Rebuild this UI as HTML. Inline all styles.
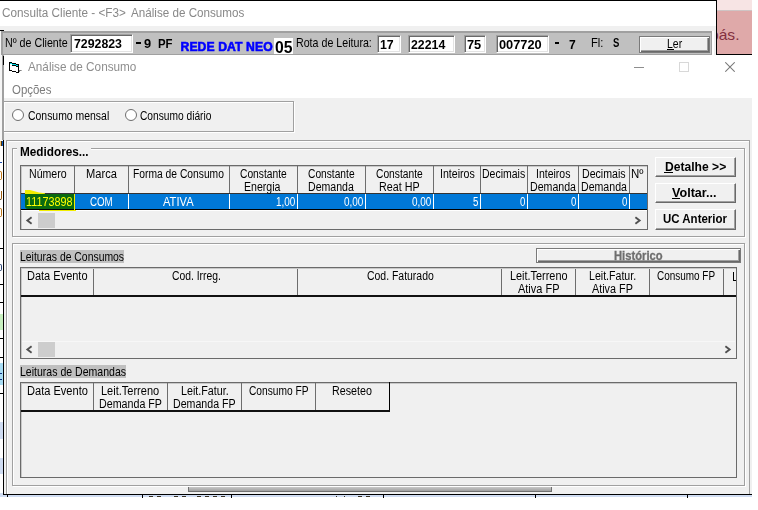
<!DOCTYPE html>
<html><head><meta charset="utf-8"><title>Análise de Consumo</title>
<style>
html,body{margin:0;padding:0;background:#fff;}
body{width:758px;height:510px;position:relative;overflow:hidden;font-family:"Liberation Sans",sans-serif;}
.a{position:absolute;}
.t{position:absolute;white-space:pre;line-height:20px;transform-origin:0 50%;font-family:"Liberation Sans",sans-serif;}
.inp{position:absolute;background:#fff;box-sizing:border-box;border-top:1px solid #a0a0a0;border-left:1px solid #a0a0a0;border-right:1px solid #fff;border-bottom:1px solid #fff;box-shadow:inset 1px 1px 0 #696969, inset -1px -1px 0 #e3e3e3;}
.btn{position:absolute;background:#f0f0f0;box-sizing:border-box;border-top:1px solid #fff;border-left:1px solid #fff;border-right:1px solid #696969;border-bottom:1px solid #696969;box-shadow:inset -1px -1px 0 #a0a0a0;}
.grp{position:absolute;box-sizing:border-box;border:1px solid #a0a0a0;box-shadow:inset 1px 1px 0 #fff, 1px 1px 0 #fff;}
.grid{position:absolute;box-sizing:border-box;border:1px solid #6a6a6a;box-shadow:inset 1px 1px 0 #c8c8c8;background:#f0f0f0;}
.vd{position:absolute;width:1px;background:#6d6d6d;}
.wd{position:absolute;width:1px;background:#fff;}
</style></head><body>

<!-- ===== outer window "Consulta Cliente" ===== -->
<div class="a" style="left:0;top:0;width:717px;height:1px;background:#000"></div>
<div class="a" style="left:716px;top:0;width:1px;height:55px;background:#000"></div>
<div class="a" style="left:0;top:26px;width:716px;height:5px;background:#f0f0f0"></div>
<div class="a" style="left:0;top:30px;width:4px;height:1px;background:#000"></div>
<!-- left strip -->
<div class="a" style="left:0;top:31px;width:2px;height:109px;background:#f6f6f6"></div>
<div class="a" style="left:0;top:140px;width:3px;height:355px;background:#fff"></div>
<div class="a" style="left:0;top:141px;width:1px;height:5px;background:#f0c878"></div>
<div class="a" style="left:1px;top:141px;width:1px;height:5px;background:#50300c"></div>
<div class="a" style="left:2px;top:141px;width:1px;height:5px;background:#1060c0"></div>
<div class="a" style="left:0;top:162px;width:2px;height:1px;background:#2050b0"></div>
<div class="a" style="left:0;top:171px;width:2px;height:9px;border-radius:0 4px 4px 0;box-sizing:border-box;border:1px solid #c07818;border-left:none;background:#fff"></div>
<div class="a" style="left:0;top:191px;width:2px;height:9px;border-radius:0 0 3px 0;box-sizing:border-box;border-right:1px solid #a06010;border-bottom:1px solid #503010"></div>
<div class="a" style="left:0;top:208px;width:2px;height:9px;border-radius:0 4px 4px 0;box-sizing:border-box;border:1px solid #c07818;border-left:none;background:#fff"></div>
<div class="a" style="left:0;top:248px;width:3px;height:1px;background:#000"></div>
<div class="a" style="left:0;top:284px;width:3px;height:1px;background:#000"></div>
<div class="a" style="left:0;top:302px;width:3px;height:1px;background:#000"></div>
<div class="a" style="left:0;top:338px;width:3px;height:1px;background:#000"></div>
<div class="a" style="left:0;top:357px;width:3px;height:1px;background:#000"></div>
<div class="a" style="left:0;top:393px;width:3px;height:1px;background:#000"></div>
<div class="a" style="left:0;top:264px;width:2px;height:7px;border-radius:0 2px 2px 0;box-sizing:border-box;border:1px solid #304878;border-left:none"></div>
<div class="a" style="left:0;top:314px;width:3px;height:16px;background:#c8f0c0"></div>
<div class="a" style="left:0;top:363px;width:3px;height:22px;background:#a8dcf4"></div>
<div class="a" style="left:0;top:373px;width:2px;height:1px;background:#103080"></div>
<div class="a" style="left:0;top:379px;width:2px;height:1px;background:#103080"></div>
<div class="a" style="left:0;top:422px;width:3px;height:17px;background:#cfdcf2"></div>
<div class="a" style="left:0;top:458px;width:3px;height:16px;background:#cfdcf2"></div>
<div class="a" style="left:0;top:493px;width:3px;height:2px;background:#cfdcf2"></div>
<!-- toolbar -->
<div class="a" style="left:1px;top:31px;width:715px;height:23px;background:#c0c0c0"></div>
<div class="a" style="left:1px;top:31px;width:711px;height:2px;background:#a0a0a0"></div>
<div class="a" style="left:1px;top:31px;width:2px;height:24px;background:#a0a0a0"></div>
<div class="a" style="left:711px;top:31px;width:1px;height:23px;background:#a0a0a0"></div>
<div class="a" style="left:712px;top:31px;width:2px;height:24px;background:#fff"></div>
<div class="a" style="left:714px;top:31px;width:2px;height:24px;background:#f0f0f0"></div>
<div class="a" style="left:3px;top:54px;width:709px;height:1px;background:#a0a0a0"></div>
<!-- toolbar inputs -->
<div class="inp" style="left:70px;top:34px;width:63px;height:19px"></div>
<div class="a" style="left:274px;top:38px;width:19px;height:16px;background:#fff"></div>
<div class="inp" style="left:377px;top:35px;width:24px;height:18px"></div>
<div class="inp" style="left:408px;top:35px;width:47px;height:18px"></div>
<div class="inp" style="left:464px;top:35px;width:22px;height:18px"></div>
<div class="inp" style="left:496px;top:35px;width:53px;height:18px"></div>
<div class="a" style="left:136px;top:42px;width:5px;height:2px;background:#000"></div>
<div class="a" style="left:555px;top:42px;width:4px;height:2px;background:#000"></div>
<!-- Ler button -->
<div class="a" style="left:639px;top:36px;width:71px;height:17px;background:#f0f0f0;box-sizing:border-box;border:1px solid #7a7a7a;box-shadow:inset 1px 1px 0 #fff, inset -1px -1px 0 #696969, inset -2px -2px 0 #a0a0a0"></div>
<div class="a" style="left:667px;top:49px;width:7px;height:1px;background:#000"></div>

<!-- ===== pink region ===== -->
<div class="a" style="left:717px;top:0;width:35px;height:10px;background:#f7e4e4"></div>
<div class="a" style="left:717px;top:10px;width:35px;height:1px;background:#cfc4c4"></div>
<div class="a" style="left:717px;top:11px;width:35px;height:43px;background:#dfa9a9;overflow:hidden"><span class="t" style="left:-7.5px;top:14px;font-size:15px;color:#83303f;transform:scaleX(1.04)">pás.</span></div>
<div class="a" style="left:716px;top:54px;width:36px;height:1px;background:#000"></div>

<!-- ===== inner window "Análise de Consumo" ===== -->
<div class="a" style="left:2px;top:55px;width:2px;height:85px;background:#a0a0a0"></div>
<div class="a" style="left:4px;top:55px;width:748px;height:43px;background:#fff"></div>
<div class="a" style="left:4px;top:98px;width:748px;height:396px;background:#f0f0f0"></div>
<div class="a" style="left:3px;top:56px;width:1px;height:9px;background:#000"></div>
<div class="a" style="left:3px;top:140px;width:1px;height:355px;background:#000"></div>
<div class="a" style="left:3px;top:494px;width:749px;height:1px;background:#000"></div>
<div class="a" style="left:0;top:495px;width:752px;height:2px;background:#cfdcf2"></div>

<!-- window icon -->
<svg class="a" style="left:8px;top:61px" width="16" height="14" viewBox="8 61 16 14" shape-rendering="crispEdges">
 <g fill="#000">
  <rect x="9" y="62" width="3" height="1"/><rect x="12" y="63" width="4" height="1"/><rect x="16" y="64" width="3" height="1"/>
  <rect x="9" y="62" width="1" height="9"/>
  <rect x="18" y="64" width="1" height="9"/>
  <rect x="9" y="70" width="3" height="1"/><rect x="12" y="71" width="4" height="1"/><rect x="16" y="72" width="3" height="1"/>
  <rect x="12" y="65" width="4" height="1"/><rect x="16" y="66" width="2" height="1"/>
 </g>
 <g fill="#00e0e8">
  <rect x="10" y="63" width="2" height="1"/><rect x="12" y="64" width="4" height="1"/><rect x="16" y="65" width="2" height="1"/>
 </g>
 <rect x="19" y="70" width="2" height="1" fill="#808080"/><rect x="19" y="71" width="1" height="1" fill="#808080"/><rect x="21" y="70" width="1" height="1" fill="#b0b0b0"/>
</svg>
<!-- window controls -->
<div class="a" style="left:634px;top:67px;width:10px;height:1px;background:#8e8e8e"></div>
<div class="a" style="left:679px;top:62px;width:10px;height:10px;box-sizing:border-box;border:1px solid #d8d8d8"></div>
<svg class="a" style="left:725px;top:62px" width="10" height="10" viewBox="0 0 10 10"><path d="M0.3 0.3 L9.7 9.7 M9.7 0.3 L0.3 9.7" stroke="#7a7a7a" stroke-width="1.05" fill="none"/></svg>

<!-- radio frame -->
<div class="grp" style="left:3px;top:101px;width:291px;height:31px"></div>
<div class="a" style="left:12px;top:109px;width:12px;height:12px;border-radius:50%;background:#fff;box-sizing:border-box;border:1px solid #6e6e6e"></div>
<div class="a" style="left:125px;top:109px;width:12px;height:12px;border-radius:50%;background:#fff;box-sizing:border-box;border:1px solid #6e6e6e"></div>

<!-- big panel -->
<div class="a" style="left:6px;top:140px;width:744px;height:354px;box-sizing:border-box;border:1px solid #a0a0a0;border-bottom:none;box-shadow:inset 1px 1px 0 #fff"></div>

<!-- Medidores group -->
<div class="grp" style="left:12px;top:148px;width:733px;height:89px"></div>
<div class="a" style="left:17px;top:146px;width:74px;height:6px;background:#f0f0f0"></div>

<!-- grid 1 -->
<div class="grid" style="left:20px;top:165px;width:628px;height:65px"></div>
<div class="vd" style="left:74px;top:166px;height:27px"></div>
<div class="vd" style="left:128px;top:166px;height:27px"></div>
<div class="vd" style="left:229px;top:166px;height:27px"></div>
<div class="vd" style="left:297px;top:166px;height:27px"></div>
<div class="vd" style="left:365px;top:166px;height:27px"></div>
<div class="vd" style="left:433px;top:166px;height:27px"></div>
<div class="vd" style="left:480px;top:166px;height:27px"></div>
<div class="vd" style="left:527px;top:166px;height:27px"></div>
<div class="vd" style="left:578px;top:166px;height:27px"></div>
<div class="vd" style="left:629px;top:166px;height:27px"></div>
<div class="a" style="left:21px;top:193px;width:626px;height:1px;background:#333"></div>
<div class="a" style="left:21px;top:194px;width:626px;height:15px;background:#0078d7"></div>
<div class="a" style="left:21px;top:209px;width:626px;height:1px;background:#000"></div>
<div class="a" style="left:21px;top:210px;width:626px;height:1px;background:#fff"></div>
<div class="wd" style="left:74px;top:194px;height:15px"></div>
<div class="wd" style="left:128px;top:194px;height:15px"></div>
<div class="wd" style="left:229px;top:194px;height:15px"></div>
<div class="wd" style="left:297px;top:194px;height:15px"></div>
<div class="wd" style="left:365px;top:194px;height:15px"></div>
<div class="wd" style="left:433px;top:194px;height:15px"></div>
<div class="wd" style="left:480px;top:194px;height:15px"></div>
<div class="wd" style="left:527px;top:194px;height:15px"></div>
<div class="wd" style="left:578px;top:194px;height:15px"></div>
<div class="wd" style="left:629px;top:194px;height:15px"></div>
<!-- yellow highlight + green cell -->
<svg class="a" style="left:24px;top:189px" width="24" height="6" viewBox="24 189 24 6"><path d="M25 194 L25 190 L30 190 L39 192.4 L45 193.2 L45 194 Z" fill="#f2ee00"/></svg>
<div class="a" style="left:39px;top:210px;width:37px;height:1px;background:#f2ee00"></div>
<div class="a" style="left:74px;top:194px;width:1px;height:16px;background:#f2ee00"></div>
<div class="a" style="left:25px;top:194px;width:49px;height:15px;background:#0a6a10;border-radius:0 0 0 3px"></div>
<!-- scrollbar 1 -->
<div class="a" style="left:38px;top:213px;width:17px;height:15px;background:#cdcdcd"></div>
<svg class="a" style="left:25px;top:216px" width="8" height="9" viewBox="0 0 8 9"><path d="M6.6 1.3 L2.4 4.5 L6.6 7.7" stroke="#505050" stroke-width="1.9" fill="none"/></svg>
<svg class="a" style="left:634px;top:216px" width="8" height="9" viewBox="0 0 8 9"><path d="M1.4 1.3 L5.6 4.5 L1.4 7.7" stroke="#505050" stroke-width="1.9" fill="none"/></svg>

<!-- buttons -->
<div class="btn" style="left:655px;top:157px;width:81px;height:20px"></div>
<div class="btn" style="left:655px;top:183px;width:81px;height:20px"></div>
<div class="btn" style="left:655px;top:209px;width:81px;height:21px"></div>
<div class="a" style="left:664px;top:172px;width:9px;height:1px;background:#000"></div>
<div class="a" style="left:672px;top:198px;width:8px;height:1px;background:#000"></div>

<!-- group 2 -->
<div class="grp" style="left:12px;top:243px;width:733px;height:243px"></div>
<div class="a" style="left:20px;top:250px;width:104px;height:13px;background:#c0c0c0"></div>
<!-- Historico button -->
<div class="a" style="left:536px;top:248px;width:205px;height:15px;background:#f0f0f0;box-sizing:border-box;border:1px solid #7a7a7a;box-shadow:inset 1px 1px 0 #fff, inset -1px -1px 0 #696969, inset -2px -2px 0 #a0a0a0"></div>

<!-- grid 2 -->
<div class="grid" style="left:20px;top:267px;width:717px;height:92px"></div>
<div class="vd" style="left:93px;top:269px;height:26px"></div>
<div class="vd" style="left:297px;top:269px;height:26px"></div>
<div class="vd" style="left:501px;top:269px;height:26px"></div>
<div class="vd" style="left:575px;top:269px;height:26px"></div>
<div class="vd" style="left:649px;top:269px;height:26px"></div>
<div class="vd" style="left:723px;top:269px;height:26px"></div>
<div class="a" style="left:21px;top:295px;width:715px;height:2px;background:#111"></div>
<div class="a" style="left:733px;top:272px;width:1px;height:9px;background:#000"></div>
<div class="a" style="left:733px;top:280px;width:3px;height:1px;background:#000"></div>
<div class="a" style="left:22px;top:341px;width:713px;height:1px;background:#f7f7f7"></div>
<div class="a" style="left:38px;top:342px;width:17px;height:15px;background:#cdcdcd"></div>
<svg class="a" style="left:25px;top:345px" width="8" height="9" viewBox="0 0 8 9"><path d="M6.6 1.3 L2.4 4.5 L6.6 7.7" stroke="#505050" stroke-width="1.9" fill="none"/></svg>
<svg class="a" style="left:724px;top:345px" width="8" height="9" viewBox="0 0 8 9"><path d="M1.4 1.3 L5.6 4.5 L1.4 7.7" stroke="#505050" stroke-width="1.9" fill="none"/></svg>

<!-- section 3 -->
<div class="a" style="left:20px;top:365px;width:106px;height:13px;background:#c0c0c0"></div>
<div class="grid" style="left:20px;top:382px;width:717px;height:96px"></div>
<div class="vd" style="left:93px;top:383px;height:27px"></div>
<div class="vd" style="left:167px;top:383px;height:27px"></div>
<div class="vd" style="left:241px;top:383px;height:27px"></div>
<div class="vd" style="left:315px;top:383px;height:27px"></div>
<div class="a" style="left:389px;top:382px;width:1px;height:30px;background:#000"></div>
<div class="a" style="left:21px;top:410px;width:369px;height:2px;background:#111"></div>

<!-- bottom bar -->
<div class="a" style="left:188px;top:487px;width:364px;height:5px;background:linear-gradient(#c8c8c8,#a0a0a0);box-sizing:border-box;border-left:1px solid #707070;border-bottom:1px solid #707070;border-right:1px solid #707070"></div>

<!-- background remnants at bottom -->
<div class="a" style="left:7px;top:495px;width:1px;height:2px;background:#000"></div>
<div class="a" style="left:142px;top:495px;width:1px;height:3px;background:#000"></div>
<div class="a" style="left:231px;top:495px;width:1px;height:3px;background:#000"></div>
<div class="a" style="left:383px;top:495px;width:1px;height:3px;background:#000"></div>
<div class="a" style="left:535px;top:495px;width:1px;height:3px;background:#000"></div>
<div class="a" style="left:687px;top:495px;width:1px;height:3px;background:#000"></div>

<div class="a" style="left:149px;top:496px;width:4px;height:1px;background:#3a3428"></div>
<div class="a" style="left:157px;top:496px;width:4px;height:1px;background:#3a3428"></div>
<div class="a" style="left:174px;top:496px;width:4px;height:1px;background:#3a3428"></div>
<div class="a" style="left:182px;top:496px;width:4px;height:1px;background:#3a3428"></div>
<div class="a" style="left:197px;top:496px;width:4px;height:1px;background:#3a3428"></div>
<div class="a" style="left:205px;top:496px;width:4px;height:1px;background:#3a3428"></div>
<div class="a" style="left:213px;top:496px;width:4px;height:1px;background:#3a3428"></div>
<div class="a" style="left:221px;top:496px;width:4px;height:1px;background:#3a3428"></div>
<div class="a" style="left:358px;top:496px;width:4px;height:1px;background:#3a3428"></div>
<div class="a" style="left:366px;top:496px;width:4px;height:1px;background:#3a3428"></div>
<div class="a" style="left:336px;top:496px;width:1px;height:1px;background:#3a3428"></div>
<div class="a" style="left:344px;top:496px;width:1px;height:1px;background:#3a3428"></div>
<div id="txt" style="position:absolute;left:0;top:0;width:758px;height:510px;will-change:transform">
<span class="t" style="left:1.5px;top:3px;font-size:12.3px;font-weight:400;color:#888888;transform:scaleX(0.9538);">Consulta Cliente - &lt;F3&gt;</span>
<span class="t" style="left:130.6px;top:3px;font-size:12.3px;font-weight:400;color:#888888;transform:scaleX(0.9475);">Análise de Consumos</span>
<span class="t" style="left:4.7px;top:33px;font-size:13px;font-weight:400;color:#000;transform:scaleX(0.8221);">Nº de Cliente</span>
<span class="t" style="left:74.3px;top:34px;font-size:13px;font-weight:700;color:#000;transform:scaleX(0.9468);">7292823</span>
<span class="t" style="left:143.5px;top:34px;font-size:13px;font-weight:700;color:#000;transform:scaleX(0.9857);">9</span>
<span class="t" style="left:158.4px;top:34px;font-size:13px;font-weight:700;color:#000;transform:scaleX(0.8758);">PF</span>
<span class="t" style="left:180.5px;top:37px;font-size:12.2px;font-weight:700;color:#0000ff;letter-spacing:0.090px;-webkit-text-stroke:0.6px #0000ff;">REDE DAT NEO</span>
<span class="t" style="left:274.7px;top:38px;font-size:16px;font-weight:700;color:#000;transform:scaleX(0.9833);">05</span>
<span class="t" style="left:295.7px;top:33px;font-size:13px;font-weight:400;color:#000;transform:scaleX(0.8196);">Rota de Leitura:</span>
<span class="t" style="left:379.5px;top:35px;font-size:13px;font-weight:700;color:#000;transform:scaleX(0.9487);">17</span>
<span class="t" style="left:410.5px;top:35px;font-size:13px;font-weight:700;color:#000;transform:scaleX(0.9480);">22214</span>
<span class="t" style="left:467.0px;top:35px;font-size:13px;font-weight:700;color:#000;transform:scaleX(0.9838);">75</span>
<span class="t" style="left:499.0px;top:35px;font-size:13px;font-weight:700;color:#000;transform:scaleX(0.9849);">007720</span>
<span class="t" style="left:568.8px;top:35px;font-size:13px;font-weight:700;color:#000;transform:scaleX(0.9286);">7</span>
<span class="t" style="left:590.8px;top:33px;font-size:13px;font-weight:400;color:#000;transform:scaleX(0.8574);">Fl:</span>
<span class="t" style="left:612.6px;top:33px;font-size:13px;font-weight:700;color:#000;transform:scaleX(0.7333);">S</span>
<span class="t" style="left:666.6px;top:34px;font-size:13px;font-weight:400;color:#000;transform:scaleX(0.8072);">Ler</span>
<span class="t" style="left:28.2px;top:57px;font-size:12.6px;font-weight:400;color:#8e8e8e;transform:scaleX(0.9328);">Análise de Consumo</span>
<span class="t" style="left:11.9px;top:80px;font-size:12.3px;font-weight:400;color:#7c7c7c;transform:scaleX(0.9306);">Opções</span>
<span class="t" style="left:27.8px;top:106px;font-size:12.3px;font-weight:400;color:#000;transform:scaleX(0.8488);">Consumo mensal</span>
<span class="t" style="left:140.3px;top:106px;font-size:12.3px;font-weight:400;color:#000;transform:scaleX(0.8298);">Consumo diário</span>
<span class="t" style="left:19.8px;top:142px;font-size:12.5px;font-weight:700;color:#000;transform:scaleX(0.9412);">Medidores...</span>
<span class="t" style="left:28.6px;top:164px;font-size:12.3px;font-weight:400;color:#000;transform:scaleX(0.8602);">Número</span>
<span class="t" style="left:85.5px;top:164px;font-size:12.3px;font-weight:400;color:#000;transform:scaleX(0.9032);">Marca</span>
<span class="t" style="left:133.0px;top:164px;font-size:12.3px;font-weight:400;color:#000;transform:scaleX(0.8365);">Forma de Consumo</span>
<span class="t" style="left:239.8px;top:164px;font-size:12.3px;font-weight:400;color:#000;transform:scaleX(0.8343);">Constante</span>
<span class="t" style="left:244.4px;top:177px;font-size:12.3px;font-weight:400;color:#000;transform:scaleX(0.8593);">Energia</span>
<span class="t" style="left:308.0px;top:164px;font-size:12.3px;font-weight:400;color:#000;transform:scaleX(0.8307);">Constante</span>
<span class="t" style="left:307.9px;top:177px;font-size:12.3px;font-weight:400;color:#000;transform:scaleX(0.8594);">Demanda</span>
<span class="t" style="left:376.0px;top:164px;font-size:12.3px;font-weight:400;color:#000;transform:scaleX(0.8325);">Constante</span>
<span class="t" style="left:378.6px;top:177px;font-size:12.3px;font-weight:400;color:#000;transform:scaleX(0.8725);">Reat HP</span>
<span class="t" style="left:439.5px;top:164px;font-size:12.3px;font-weight:400;color:#000;transform:scaleX(0.8628);">Inteiros</span>
<span class="t" style="left:482.1px;top:164px;font-size:12.3px;font-weight:400;color:#000;transform:scaleX(0.8540);">Decimais</span>
<span class="t" style="left:535.5px;top:164px;font-size:12.3px;font-weight:400;color:#000;transform:scaleX(0.8525);">Inteiros</span>
<span class="t" style="left:529.8px;top:177px;font-size:12.3px;font-weight:400;color:#000;transform:scaleX(0.8632);">Demanda</span>
<span class="t" style="left:581.9px;top:164px;font-size:12.3px;font-weight:400;color:#000;transform:scaleX(0.8621);">Decimais</span>
<span class="t" style="left:581.1px;top:177px;font-size:12.3px;font-weight:400;color:#000;transform:scaleX(0.8613);">Demanda</span>
<span class="t" style="left:631.3px;top:164px;font-size:12.3px;font-weight:400;color:#000;transform:scaleX(0.9316);">Nº</span>
<span class="t" style="left:26.3px;top:192px;font-size:12.3px;font-weight:400;color:#ffff00;transform:scaleX(0.8804);">11173898</span>
<span class="t" style="left:89.7px;top:192px;font-size:12.3px;font-weight:400;color:#fff;transform:scaleX(0.7910);">COM</span>
<span class="t" style="left:162.9px;top:192px;font-size:12.3px;font-weight:400;color:#fff;transform:scaleX(0.9071);">ATIVA</span>
<span class="t" style="left:275.9px;top:192px;font-size:12.3px;font-weight:400;color:#fff;transform:scaleX(0.8093);">1,00</span>
<span class="t" style="left:343.9px;top:192px;font-size:12.3px;font-weight:400;color:#fff;transform:scaleX(0.8093);">0,00</span>
<span class="t" style="left:412.1px;top:192px;font-size:12.3px;font-weight:400;color:#fff;transform:scaleX(0.8093);">0,00</span>
<span class="t" style="left:473.3px;top:192px;font-size:12.3px;font-weight:400;color:#fff;transform:scaleX(0.7857);">5</span>
<span class="t" style="left:520.2px;top:192px;font-size:12.3px;font-weight:400;color:#fff;transform:scaleX(0.7857);">0</span>
<span class="t" style="left:571.0px;top:192px;font-size:12.3px;font-weight:400;color:#fff;transform:scaleX(0.7857);">0</span>
<span class="t" style="left:621.9px;top:192px;font-size:12.3px;font-weight:400;color:#fff;transform:scaleX(0.7857);">0</span>
<span class="t" style="left:664.5px;top:157px;font-size:12.8px;font-weight:700;color:#000;transform:scaleX(0.9462);">Detalhe &gt;&gt;</span>
<span class="t" style="left:672.0px;top:183px;font-size:12.8px;font-weight:700;color:#000;transform:scaleX(0.9839);">Voltar...</span>
<span class="t" style="left:662.5px;top:209px;font-size:12.8px;font-weight:700;color:#000;transform:scaleX(0.8966);">UC Anterior</span>
<span class="t" style="left:613.7px;top:246px;font-size:12.5px;font-weight:700;color:#6e6e6e;transform:scaleX(0.8966);-webkit-text-stroke:0.3px #6e6e6e;">Histórico</span>
<span class="t" style="left:19.7px;top:247px;font-size:12.6px;font-weight:400;color:#000;transform:scaleX(0.8259);">Leituras de Consumos</span>
<span class="t" style="left:26.7px;top:266px;font-size:12.3px;font-weight:400;color:#000;transform:scaleX(0.8947);">Data Evento</span>
<span class="t" style="left:171.5px;top:266px;font-size:12.3px;font-weight:400;color:#000;transform:scaleX(0.8409);">Cod. Irreg.</span>
<span class="t" style="left:366.6px;top:266px;font-size:12.3px;font-weight:400;color:#000;transform:scaleX(0.8493);">Cod. Faturado</span>
<span class="t" style="left:510.3px;top:266px;font-size:12.3px;font-weight:400;color:#000;transform:scaleX(0.8861);">Leit.Terreno</span>
<span class="t" style="left:517.5px;top:279px;font-size:12.3px;font-weight:400;color:#000;transform:scaleX(0.8927);">Ativa FP</span>
<span class="t" style="left:589.1px;top:266px;font-size:12.3px;font-weight:400;color:#000;transform:scaleX(0.8617);">Leit.Fatur.</span>
<span class="t" style="left:591.5px;top:279px;font-size:12.3px;font-weight:400;color:#000;transform:scaleX(0.8797);">Ativa FP</span>
<span class="t" style="left:656.8px;top:266px;font-size:12.3px;font-weight:400;color:#000;transform:scaleX(0.8092);">Consumo FP</span>
<span class="t" style="left:19.7px;top:362px;font-size:12.6px;font-weight:400;color:#000;transform:scaleX(0.8372);">Leituras de Demandas</span>
<span class="t" style="left:26.7px;top:381px;font-size:12.3px;font-weight:400;color:#000;transform:scaleX(0.8992);">Data Evento</span>
<span class="t" style="left:101.3px;top:381px;font-size:12.3px;font-weight:400;color:#000;transform:scaleX(0.8955);">Leit.Terreno</span>
<span class="t" style="left:98.8px;top:394px;font-size:12.3px;font-weight:400;color:#000;transform:scaleX(0.8688);">Demanda FP</span>
<span class="t" style="left:180.6px;top:381px;font-size:12.3px;font-weight:400;color:#000;transform:scaleX(0.8730);">Leit.Fatur.</span>
<span class="t" style="left:173.1px;top:394px;font-size:12.3px;font-weight:400;color:#000;transform:scaleX(0.8646);">Demanda FP</span>
<span class="t" style="left:248.6px;top:381px;font-size:12.3px;font-weight:400;color:#000;transform:scaleX(0.8301);">Consumo FP</span>
<span class="t" style="left:332.1px;top:381px;font-size:12.3px;font-weight:400;color:#000;transform:scaleX(0.8718);">Reseteo</span>
</div>
</body></html>
